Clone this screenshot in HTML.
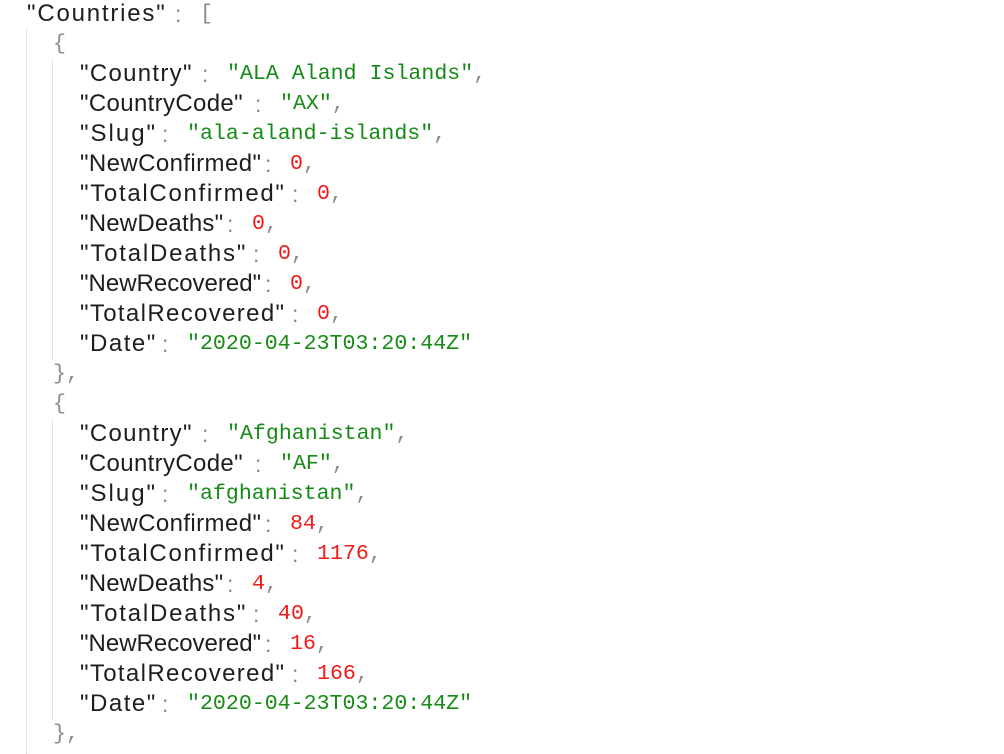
<!DOCTYPE html>
<html><head><meta charset="utf-8"><style>
html,body{margin:0;padding:0;background:#fff;width:1004px;height:754px;overflow:hidden;position:relative}
.r{position:absolute;height:30px;line-height:30px;white-space:pre;display:flex;align-items:center}
.k{font-family:"Liberation Sans",sans-serif;font-size:24px;color:#1e1e1e;display:inline-block;overflow:visible}
.c{font-family:"Liberation Sans",sans-serif;font-size:23px;color:#8a8a8a;display:inline-block;width:30px;text-indent:5px}
.s{font-family:"Liberation Mono",monospace;font-size:21.6px;color:#168a16}
.n{font-family:"Liberation Mono",monospace;font-size:21.6px;color:#f21818}
.p{font-family:"Liberation Mono",monospace;font-size:21.6px;color:#8a8a8a}
.g{position:absolute;width:0;border-left:1px dotted #cfcfcf}
.k1{width:117px;letter-spacing:1.3px}
.k2{width:170px;letter-spacing:0.35px}
.k3{width:77px;letter-spacing:2px}
.k4{width:180px;letter-spacing:0.4px}
.k5{width:207px;letter-spacing:1.7px}
.k6{width:142px;letter-spacing:0.2px}
.k7{width:168px;letter-spacing:1.8px}
.k8{width:180px;letter-spacing:0px}
.k9{width:207px;letter-spacing:1.35px}
.k10{width:77px;letter-spacing:1.5px}
</style></head><body>
<div class="g" style="left:26px;top:29px;height:725px"></div>
<div class="g" style="left:52px;top:59px;height:300px;border-left:1px solid #e2e2e2"></div>
<div class="g" style="left:52px;top:419px;height:300px;border-left:1px solid #e2e2e2"></div>

<div class="r" style="left:27px;top:-1px"><span class="k" style="width:146px;letter-spacing:1.8px">"Countries"</span><span class="c" style="width:27px;text-indent:2px">:</span><span class="p">[</span></div>
<div class="r" style="left:53px;top:29px"><span class="p">{</span></div>
<div class="r" style="left:80px;top:59px"><span class="k k1">"Country"</span><span class="c">:</span><span class="s">"ALA Aland Islands"</span><span class="p">,</span></div>
<div class="r" style="left:80px;top:89px"><span class="k k2">"CountryCode"</span><span class="c">:</span><span class="s">"AX"</span><span class="p">,</span></div>
<div class="r" style="left:80px;top:119px"><span class="k k3">"Slug"</span><span class="c">:</span><span class="s">"ala-aland-islands"</span><span class="p">,</span></div>
<div class="r" style="left:80px;top:149px"><span class="k k4">"NewConfirmed"</span><span class="c">:</span><span class="n">0</span><span class="p">,</span></div>
<div class="r" style="left:80px;top:179px"><span class="k k5">"TotalConfirmed"</span><span class="c">:</span><span class="n">0</span><span class="p">,</span></div>
<div class="r" style="left:80px;top:209px"><span class="k k6">"NewDeaths"</span><span class="c">:</span><span class="n">0</span><span class="p">,</span></div>
<div class="r" style="left:80px;top:239px"><span class="k k7">"TotalDeaths"</span><span class="c">:</span><span class="n">0</span><span class="p">,</span></div>
<div class="r" style="left:80px;top:269px"><span class="k k8">"NewRecovered"</span><span class="c">:</span><span class="n">0</span><span class="p">,</span></div>
<div class="r" style="left:80px;top:299px"><span class="k k9">"TotalRecovered"</span><span class="c">:</span><span class="n">0</span><span class="p">,</span></div>
<div class="r" style="left:80px;top:329px"><span class="k k10">"Date"</span><span class="c">:</span><span class="s">"2020-04-23T03:20:44Z"</span></div>
<div class="r" style="left:53px;top:359px"><span class="p">},</span></div>
<div class="r" style="left:53px;top:389px"><span class="p">{</span></div>
<div class="r" style="left:80px;top:419px"><span class="k k1">"Country"</span><span class="c">:</span><span class="s">"Afghanistan"</span><span class="p">,</span></div>
<div class="r" style="left:80px;top:449px"><span class="k k2">"CountryCode"</span><span class="c">:</span><span class="s">"AF"</span><span class="p">,</span></div>
<div class="r" style="left:80px;top:479px"><span class="k k3">"Slug"</span><span class="c">:</span><span class="s">"afghanistan"</span><span class="p">,</span></div>
<div class="r" style="left:80px;top:509px"><span class="k k4">"NewConfirmed"</span><span class="c">:</span><span class="n">84</span><span class="p">,</span></div>
<div class="r" style="left:80px;top:539px"><span class="k k5">"TotalConfirmed"</span><span class="c">:</span><span class="n">1176</span><span class="p">,</span></div>
<div class="r" style="left:80px;top:569px"><span class="k k6">"NewDeaths"</span><span class="c">:</span><span class="n">4</span><span class="p">,</span></div>
<div class="r" style="left:80px;top:599px"><span class="k k7">"TotalDeaths"</span><span class="c">:</span><span class="n">40</span><span class="p">,</span></div>
<div class="r" style="left:80px;top:629px"><span class="k k8">"NewRecovered"</span><span class="c">:</span><span class="n">16</span><span class="p">,</span></div>
<div class="r" style="left:80px;top:659px"><span class="k k9">"TotalRecovered"</span><span class="c">:</span><span class="n">166</span><span class="p">,</span></div>
<div class="r" style="left:80px;top:689px"><span class="k k10">"Date"</span><span class="c">:</span><span class="s">"2020-04-23T03:20:44Z"</span></div>
<div class="r" style="left:53px;top:719px"><span class="p">},</span></div>
</body></html>
